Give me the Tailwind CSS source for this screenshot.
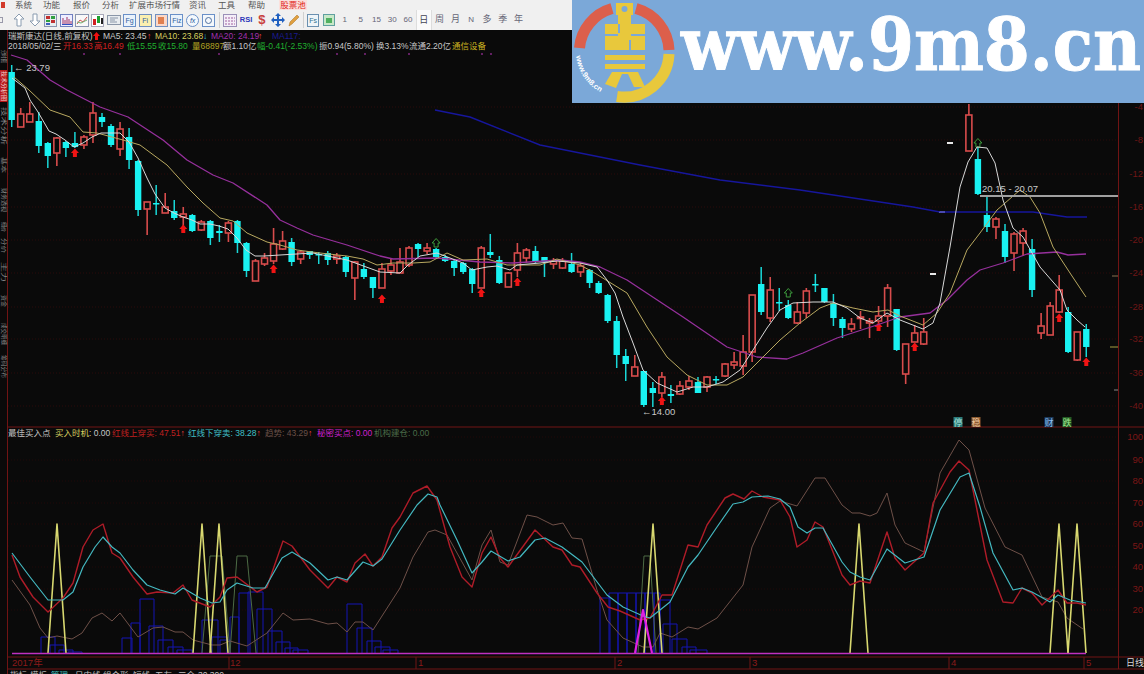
<!DOCTYPE html>
<html lang="zh-CN">
<head>
  <meta charset="UTF-8">
  <title>瑞斯康达 - 最佳买入点</title>
  <script src="https://cdn.jsdelivr.net/npm/@tailwindcss/browser@4"></script>
</head>
<body class="bg-[#0a0a0a]">
<div class="w-[1144px] h-[674px] flex flex-col overflow-hidden relative font-['Liberation_Sans','Noto_Sans_CJK_SC',sans-serif]">

  <!-- menu -->
  <div class="h-[10px] bg-[#f0f0f0] flex items-center text-[8.5px] leading-[10px] text-[#555] pl-[1px] shrink-0">
    <span class="w-[4px] h-[6px] bg-[#d23a2a] mr-[10px]"></span>
    <span class="w-[28px]">系统</span>
    <span class="w-[30px]">功能</span>
    <span class="w-[29px]">报价</span>
    <span class="w-[27px]">分析</span>
    <span class="w-[60px]">扩展市场行情</span>
    <span class="w-[29px]">资讯</span>
    <span class="w-[30px]">工具</span>
    <span class="w-[31px]">帮助</span>
    <span class="w-[28px] bg-[#fbe0dc] text-[#e02020] text-center">股票池</span>
  </div>

  <!-- toolbar -->
  <div class="h-[20px] w-[572px] bg-[#f0f0f0] flex items-center pl-[11px] text-[8px] text-[#667] shrink-0 relative">
    <span class="absolute left-0 top-[7px] w-[3px] h-[6px] border border-l-0 border-[#99a]"></span>
    <span class="w-[15.8px] flex justify-center"><svg width="12" height="14" viewBox="0 0 12 14"><path d="M6 1 11 6H8V13H4V6H1Z" fill="#fff" stroke="#8a9cb0"/></svg></span>
    <span class="w-[15.8px] flex justify-center"><svg width="12" height="14" viewBox="0 0 12 14"><path d="M6 13 11 8H8V1H4V8H1Z" fill="#fff" stroke="#8a9cb0"/></svg></span>
    <span class="w-[15.8px] flex justify-center"><svg width="13" height="13" viewBox="0 0 13 13"><rect x=".5" y=".5" width="12" height="12" fill="#e8eef0" stroke="#8a96b0"/><rect x="2" y="2" width="4" height="3" fill="#c03030"/><rect x="7" y="2" width="4" height="3" fill="#30a040"/><rect x="2" y="6" width="4" height="2" fill="#30a040"/><rect x="7" y="6" width="4" height="3" fill="#c03030"/><rect x="2" y="9" width="4" height="2" fill="#4060c0"/></svg></span>
    <span class="w-[15.8px] flex justify-center"><svg width="13" height="13" viewBox="0 0 13 13"><rect x=".5" y=".5" width="12" height="12" fill="#eef" stroke="#7080c0"/><path d="M3 10V4M5 10V6M7 10V3M9 10V5M11 10V7" stroke="#a03060"/><path d="M2 10.500H12" stroke="#3050c0"/></svg></span>
    <span class="w-[15.8px] flex justify-center"><svg width="14" height="13" viewBox="0 0 14 13"><rect x=".5" y=".5" width="13" height="12" fill="#f8f8f8" stroke="#8a96b0"/><path d="M2 10 5 6 8 8 12 3" stroke="#d05050" fill="none"/><path d="M2 8 6 9 12 6" stroke="#70b070" fill="none"/></svg></span>
    <span class="w-[15.8px] flex justify-center"><svg width="13" height="13" viewBox="0 0 13 13"><rect x=".5" y=".5" width="12" height="12" fill="#fff" stroke="#aab"/><rect x="2" y="5" width="3" height="6" fill="#d02020"/><rect x="6" y="2" width="3" height="7" fill="#20a030"/><rect x="10" y="4" width="2" height="6" fill="#202020"/></svg></span>
    <span class="w-[15.8px] flex justify-center"><svg width="14" height="12" viewBox="0 0 14 12"><rect x=".5" y="1.500" width="13" height="9" fill="#e8ecf0" stroke="#8a96a8"/><path d="M3 4H11M3 6H8M3 8H10" stroke="#8a96a8"/></svg></span>
    <span class="w-[15.8px] flex justify-center"><span class="w-[13px] h-[13px] border border-[#6a90c8] bg-[#eaf2fb] text-[7px] leading-[11px] text-center text-[#3060a0]">Fg</span></span>
    <span class="w-[15.8px] flex justify-center"><span class="w-[13px] h-[13px] border border-[#7090c0] bg-[#fbf0b0] text-[7px] leading-[11px] text-center text-[#3060a0]">Fi</span></span>
    <span class="w-[15.8px] flex justify-center"><span class="w-[13px] h-[13px] border border-[#7090c0] bg-[#fbd8c8] flex items-center justify-center"><span class="w-[6px] h-[7px] bg-[#e08050]"></span></span></span>
    <span class="w-[15.8px] flex justify-center"><span class="w-[13px] h-[13px] border border-[#6a90c8] bg-[#eaf2fb] text-[7px] leading-[11px] text-center text-[#3060a0]">Fiz</span></span>
    <span class="w-[15.8px] flex justify-center"><span class="w-[13px] h-[13px] border border-[#6a90c8] rounded-full bg-[#f4f8fc] text-[7px] leading-[11px] text-center italic text-[#3060a0]">fx</span></span>
    <span class="w-[15.8px] flex justify-center"><span class="w-[13px] h-[13px] border border-[#6a90c8] bg-[#f4f8fc] flex items-center justify-center"><span class="w-[7px] h-[7px] rounded-full border border-[#5070a0]"></span></span></span>
    <span class="w-[6px] h-[16px] flex justify-center"><span class="w-px h-full bg-[#d0d0d0]"></span></span>
    <span class="w-[15.8px] flex justify-center"><svg width="14" height="13" viewBox="0 0 14 13"><rect x=".5" y=".5" width="13" height="12" fill="#f4eef8" stroke="#9a90b8"/><path d="M2 4H12M2 7H12M2 10H12" stroke="#a060a0" stroke-dasharray="2 1"/></svg></span>
    <span class="w-[15.8px] text-center text-[7.5px] font-bold text-[#2a34b8]">RSI</span>
    <span class="w-[15.8px] text-center text-[13px] font-bold leading-[14px] text-[#c84040]">$</span>
    <span class="w-[15.8px] flex justify-center"><svg width="14" height="14" viewBox="0 0 14 14"><path d="M7 0 10 3H8V6H11V4L14 7 11 10V8H8V11H10L7 14 4 11H6V8H3V10L0 7 3 4V6H6V3H4Z" fill="#2060c0"/></svg></span>
    <span class="w-[15.8px] flex justify-center"><svg width="13" height="13" viewBox="0 0 13 13"><path d="M2 12 3 8 10 1 12 3 5 10Z" fill="#e0a040" stroke="#a87020" stroke-width=".5"/></svg></span>
    <span class="w-[4px] h-[16px] flex justify-center"><span class="w-px h-full bg-[#d0d0d0]"></span></span>
    <span class="w-[15.800px] flex justify-center"><span class="w-[12px] h-[13px] border border-[#6a90b0] bg-[#eef4f8] text-[7px] leading-[11px] text-center text-[#307090]">Fs</span></span>
    <span class="w-[15.8px] flex justify-center"><span class="w-[12px] h-[12px] border border-[#60a0a0] bg-[#c8e8c8] flex items-center justify-center"><span class="w-[6px] h-[5px] bg-[#50b060]"></span></span></span>
    <span class="w-[15.8px] text-center">1</span>
    <span class="w-[15.8px] text-center">5</span>
    <span class="w-[15.8px] text-center">15</span>
    <span class="w-[15.8px] text-center">30</span>
    <span class="w-[15.8px] text-center">60</span>
    <span class="w-[15.8px] h-[20px] leading-[20px] text-center text-[9px] bg-[#fafafa] border-x border-[#ddd] text-[#445]">日</span>
    <span class="w-[15.8px] text-center text-[9px]">周</span>
    <span class="w-[15.8px] text-center text-[9px]">月</span>
    <span class="w-[15.8px] text-center">N</span>
    <span class="w-[15.8px] text-center text-[9px]">多</span>
    <span class="w-[15.8px] text-center text-[9px]">季</span>
    <span class="w-[15.8px] text-center text-[9px]">年</span>
  </div>

  <!-- chart area: a canvas whose coordinates are the data -->
  <div class="relative flex-1 bg-[#0a0a0a]">
    <svg id="chart" class="absolute inset-0" width="1144" height="644" viewBox="0 30 1144 644" font-family="Liberation Sans, Noto Sans CJK SC, sans-serif"></svg>

    <!-- price legend -->
    <div class="absolute left-[8px] top-0 text-[8.5px] leading-[10px] text-[#c8c8c8] whitespace-nowrap">
      <div class="flex h-[10px] mt-[1px]">
        <span class="w-[85px]">瑞斯康达(日线,前复权)</span>
        <span class="w-[10px] flex items-center"><svg width="7" height="8" viewBox="0 0 7 8"><path d="M3.500 0 7 4H5V8H2V4H0Z" fill="#f01010"/></svg></span>
        <span class="w-[44px]">MA5: 23.45</span>
        <span class="w-[8px] text-[#f04040]">↑</span>
        <span class="w-[48px] text-[#d8d060]">MA10: 23.68</span>
        <span class="w-[8px] text-[#30d0e0]">↓</span>
        <span class="w-[47px] text-[#a030b0]">MA20: 24.19</span>
        <span class="w-[14px] text-[#f04040]">↑</span>
        <span class="text-[#1a1a90]">MA117:</span>
      </div>
      <div class="flex h-[10px]">
        <span class="w-[55px]">2018/05/02/三</span>
        <span class="w-[31px] text-[#d02020]">开16.33</span>
        <span class="w-[33px] text-[#d02020]">高16.49</span>
        <span class="w-[31px] text-[#20b030]">低15.55</span>
        <span class="w-[34px] text-[#20b030]">收15.80</span>
        <span class="w-[31px] text-[#b0a020]">量68897</span>
        <span class="w-[34px]">额1.10亿</span>
        <span class="w-[62px] text-[#20b030]">幅-0.41(-2.53%)</span>
        <span class="w-[57px]">振0.94(5.80%)</span>
        <span class="w-[33px]">换3.13%</span>
        <span class="w-[43px]">流通2.20亿</span>
        <span class="text-[#c8b020]">通信设备</span>
      </div>
    </div>

    <!-- indicator legend -->
    <div class="absolute left-[8px] top-[398px] flex text-[8.500px] leading-[10px] whitespace-nowrap">
      <span class="w-[47px] text-[#c8c8c8]">最佳买入点</span>
      <span class="w-[57px] text-[#d8d060]">买入时机<span class="text-[#c8c8c8]">: 0.00</span></span>
      <span class="w-[76px] text-[#c02020]">红线上穿买: 47.51<span class="text-[#f04040]">↑</span></span>
      <span class="w-[77px] text-[#40c0c8]">红线下穿卖: 38.28<span class="text-[#f04040]">↑</span></span>
      <span class="w-[52px] text-[#6a5048]">趋势: 43.29<span class="text-[#f04040]">↑</span></span>
      <span class="w-[57px] text-[#d020d0]">秘密买点: 0.00</span>
      <span class="text-[#4a6a48]">机构建仓: 0.00</span>
    </div>

    <!-- bottom tabs, cut by the window edge -->
    <div class="absolute left-[10px] top-[640px] flex text-[8.5px] leading-[10px] text-[#c0c0c0] whitespace-nowrap">
      <span class="w-[20px]">指标</span>
      <span class="w-[21px]">模板</span>
      <span class="w-[24px] text-[#40c0c0]">管理</span>
      <span class="w-[28px]">日内线</span>
      <span class="w-[30px]">组合形</span>
      <span class="w-[22px]">短线</span>
      <span class="w-[23px]">五友</span>
      <span class="w-[20px]">三仓</span>
      <span>30 300</span>
    </div>
    <span class="absolute left-[1126px] top-[628px] text-[9px] leading-[10px] text-[#d8d8d8] whitespace-nowrap">日线</span>
  </div>

  <!-- site banner over the top right of the window -->
  <div class="absolute left-[572px] top-0 w-[572px] h-[103px] bg-[#7ba8d8]">
    <svg width="572" height="103" viewBox="0 0 572 103" font-family="DejaVu Serif, serif">
      <path d="M7.500 48A45 45 0 0 1 40 8.500" fill="none" stroke="#dc5f4b" stroke-width="11"/>
      <path d="M64 8.500A45 45 0 0 1 97 50" fill="none" stroke="#dc5f4b" stroke-width="11"/>
      <path d="M97 54A45 45 0 0 1 45 96.500" fill="none" stroke="#e8c83c" stroke-width="11"/>
      <path d="M44 3H61V15H59V24H73V50H33V24H46V15H44Z" fill="#e8c83c"/>
      <circle cx="52.500" cy="9" r="3" fill="#7ba8d8"/>
      <path d="M33 35H46M59 35H73M47 24V33M58 40V50" stroke="#7ba8d8" stroke-width="2"/>
      <path d="M33 55H73V60H33ZM33 64H73V69H33ZM40 72H66L73 87H62L56 74H50L44 88 33 84Z" fill="#e8c83c"/>
      <path id="ring" d="M4 56A47 47 0 0 0 38 96" fill="none"/>
      <text font-family="Liberation Sans, sans-serif" font-size="7.500" font-weight="bold" fill="#fff"><textPath href="#ring">www.9m8.cn</textPath></text>
      <text x="109" y="70" font-size="73" font-weight="bold" fill="#fff" stroke="#fff" stroke-width="1" textLength="460" lengthAdjust="spacingAndGlyphs">www.9m8.cn</text>
    </svg>
  </div>
</div>

<script>
  // [index, body top, body bottom, wick top, wick bottom, 'r' red hollow / 'c' cyan solid]
  const candles = [
    [0,72,120,65,127,'c'],[1,114,127,108,127,'r'],[2,114,122,102,122,'r'],[3,121,146,112,153,'c'],
    [4,143,156,142,168,'c'],[5,138,153,137,166,'r'],[6,142,148,141,157,'c'],[7,143,147,132,148,'c'],
    [8,137,145,135,149,'r'],[9,113,135,102,143,'r'],[10,117,122,113,127,'c'],[11,126,145,124,147,'c'],
    [12,129,149,122,156,'r'],[13,137,160,128,169,'c'],[14,161,210,160,216,'c'],[15,202,209,202,235,'r'],
    [16,203,204,185,215,'c'],[17,207,213,193,213,'r'],[18,211,218,200,220,'c'],[19,214,217,207,227,'r'],
    [20,215,231,214,232,'c'],[21,222,230,220,231,'r'],[22,221,238,220,245,'c'],[23,231,233,225,242,'c'],
    [24,223,233,221,242,'r'],[25,221,243,220,253,'c'],[26,243,271,242,277,'c'],[27,261,281,259,281,'r'],
    [28,258,264,253,266,'r'],[29,244,261,228,264,'r'],[30,241,249,231,250,'r'],[31,242,262,238,266,'c'],
    [32,252,259,250,264,'r'],[33,251,255,251,259,'c'],[34,254,255,252,264,'c'],[35,253,260,251,265,'c'],
    [36,256,259,253,264,'r'],[37,257,272,256,277,'c'],[38,262,278,261,300,'r'],[39,269,277,263,279,'c'],
    [40,277,288,277,298,'c'],[41,269,288,263,288,'r'],[42,265,271,259,275,'r'],[43,262,273,248,273,'r'],
    [44,248,265,246,267,'r'],[45,244,249,243,257,'c'],[46,248,251,243,254,'r'],[47,249,257,248,259,'c'],
    [48,257,261,255,262,'c'],[49,261,268,260,276,'c'],[50,263,272,262,274,'c'],[51,269,284,268,293,'c'],
    [52,248,288,246,288,'r'],[53,252,255,234,258,'c'],[54,260,283,256,284,'c'],[55,273,287,272,287,'r'],
    [56,253,270,243,277,'r'],[57,250,258,248,263,'r'],[58,251,261,246,263,'c'],[59,257,262,257,277,'c'],
    [60,261,264,258,269,'r'],[61,261,268,258,269,'r'],[62,264,272,253,273,'c'],[63,266,272,263,277,'r'],
    [64,270,283,269,288,'c'],[65,283,293,281,294,'c'],[66,295,321,294,323,'c'],[67,321,355,316,368,'c'],
    [68,356,364,349,381,'c'],[69,367,376,355,376,'r'],[70,371,405,371,407,'c'],[71,388,393,382,407,'c'],
    [72,377,393,372,397,'r'],[73,394,396,385,403,'c'],[74,386,394,381,395,'r'],[75,381,387,376,390,'r'],
    [76,382,393,377,393,'c'],[77,377,387,376,392,'r'],[78,379,380,376,384,'c'],[79,364,376,363,377,'r'],
    [80,362,365,352,369,'r'],[81,352,366,335,375,'r'],[82,295,352,295,362,'r'],[83,284,312,267,315,'c'],
    [84,290,318,277,322,'r'],[85,302,303,288,311,'c'],[86,305,318,300,319,'c'],[87,312,323,302,324,'r'],
    [88,291,313,288,318,'r'],[89,284,285,274,292,'c'],[90,288,302,288,303,'c'],[91,303,318,294,326,'c'],
    [92,319,328,317,338,'c'],[93,324,329,318,332,'r'],[94,317,318,311,329,'r'],[95,321,323,318,338,'r'],
    [96,316,321,306,330,'r'],[97,288,316,284,327,'r'],[98,309,350,309,351,'c'],[99,344,374,344,384,'r'],
    [100,333,342,325,342,'r'],[101,332,344,318,345,'r'],[106,115,151,104,151,'r'],[107,159,194,147,195,'c'],
    [108,215,227,197,232,'c'],[109,219,227,217,239,'r'],[110,231,257,224,263,'c'],[111,234,253,232,271,'r'],
    [112,231,243,228,256,'r'],[113,249,290,239,297,'c'],[114,326,333,313,339,'r'],[115,306,335,302,335,'r'],
    [116,290,312,275,313,'r'],[117,312,352,307,353,'c'],[118,332,360,332,361,'r'],[119,329,347,324,357,'c']
  ];
  const upArrows = [[7,153],[19,229],[29,269],[41,299],[52,293],[56,282],[72,401],[96,327],[100,347],[116,318],[119,362]];
  const greenArrows = [[47,243],[86,293],[107,143]];

  const ma5 = '12,78 25,88 30,100 38,112 49,131 56,134 65,140 74,147 83,143 92,137 101,133 120,133 129,142 138,158 147,178 155,194 165,208 174,213 183,217 192,220 200,224 210,224 219,226 228,229 237,238 246,250 255,256 264,256 280,255 313,253 347,260 380,272 400,273 408,265 420,256 437,253 450,258 463,263 472,270 487,267 497,266 510,270 517,265 540,263 557,261 580,263 597,267 607,280 615,293 623,317 633,343 643,370 657,383 677,392 693,387 707,387 723,382 740,370 753,350 767,328 780,310 793,303 813,302 833,302 847,308 860,318 873,323 887,313 900,320 923,329 933,323 940,303 950,247 960,187 968,162 977,147 987,148 995,163 1003,200 1013,228 1023,237 1040,267 1060,290 1067,310 1077,320 1085,327';
  const ma10 = '14,77 29,90 50,110 70,117 83,132 97,133 123,140 140,145 167,165 187,187 203,203 220,218 233,221 247,233 267,242 280,245 297,250 320,253 347,256 363,259 377,265 393,263 413,263 430,262 447,253 463,260 487,259 507,265 540,265 557,259 580,265 593,272 627,293 647,327 667,357 687,375 707,385 727,385 743,377 760,360 780,340 800,323 820,308 833,303 853,308 873,312 888,310 900,316 923,325 937,313 950,293 967,250 980,233 997,210 1020,190 1030,197 1040,213 1053,247 1070,273 1086,297';
  const ma20 = '11,55 27,60 50,80 67,90 100,107 128,117 163,140 187,160 213,175 233,183 267,205 280,220 297,228 313,235 347,245 380,256 393,259 437,258 480,262 513,263 560,260 580,262 600,267 627,280 683,317 727,347 757,357 787,359 803,353 837,338 877,325 900,317 930,313 947,300 967,280 980,270 1003,263 1027,254 1057,252 1068,255 1086,254';
  const maBlue = '435,110 470,117 540,145 640,165 720,180 800,190 880,202 913,207 940,212 1033,212 1067,217 1087,217';

  const red = '12,555 20,577 33,597 48,612 63,598 73,583 83,547 93,530 103,524 112,553 120,558 133,577 147,594 157,592 173,593 183,585 192,600 210,607 220,597 227,578 237,577 257,592 267,587 283,541 292,546 310,570 328,588 337,577 347,582 355,563 365,554 373,566 382,557 392,528 400,517 413,493 427,486 437,500 450,547 462,577 472,587 482,553 491,537 500,558 508,567 535,530 553,547 562,550 572,565 580,567 597,593 608,607 620,611 640,620 650,618 662,595 672,595 688,545 698,547 707,525 725,498 733,494 744,499 752,491 763,497 780,500 790,517 797,547 807,540 815,522 823,527 833,552 842,575 850,585 860,581 870,583 887,532 895,558 905,570 924,553 933,503 950,472 959,461 969,470 977,510 987,560 1003,602 1013,603 1022,588 1032,593 1042,605 1058,590 1067,603 1077,603 1086,605';
  const cyan = '12,553 30,577 48,600 63,600 73,592 83,567 95,547 103,537 112,547 120,553 133,570 147,585 160,590 175,594 183,588 200,598 212,603 220,602 227,590 237,583 253,588 265,588 282,558 292,552 310,563 328,580 337,577 347,580 363,562 373,566 382,559 400,530 417,505 428,494 437,497 440,505 457,540 472,573 482,562 491,551 508,561 520,557 535,540 545,538 562,547 582,562 607,595 623,607 643,616 650,618 670,602 688,567 698,555 717,527 733,504 743,502 752,497 768,496 780,499 790,507 798,527 807,533 815,528 823,528 842,562 850,572 860,577 870,580 887,549 905,563 924,557 940,510 960,477 969,473 980,507 993,553 1013,590 1022,588 1032,592 1050,602 1058,595 1070,600 1086,603';
  const trend = '12,580 30,605 40,628 48,638 57,636 72,639 82,633 92,618 102,613 112,621 120,613 138,637 153,628 163,627 175,632 183,632 193,640 212,645 220,645 230,641 247,646 267,633 283,613 293,620 310,619 328,624 337,623 347,632 355,622 363,622 373,630 400,588 413,557 428,532 435,530 447,535 472,580 482,545 491,530 500,562 508,565 527,515 537,517 553,525 563,523 572,538 582,539 597,590 607,620 623,638 643,647 653,647 660,633 672,637 688,627 698,629 717,618 743,585 752,547 770,508 780,501 797,506 815,478 825,478 842,505 852,513 860,513 870,516 877,513 887,493 895,525 905,543 924,552 940,473 959,440 969,450 985,508 1005,547 1022,555 1042,597 1058,602 1067,618 1083,629';

  // [left, right, top] of the blue volume steps, all standing on y=653
  const steps = [
    [41,55,637],[50,64,645],[59,73,650],[68,82,652],
    [122,132,638],[131,140,623],[140,154,599],[149,163,626],[158,173,640],[168,183,647],[177,192,650],
    [202,218,620],[212,227,637],[220,230,640],[230,239,617],[239,250,593],[248,263,592],[257,272,609],[268,282,631],[276,290,642],[285,298,648],[293,308,650],
    [347,362,604],[357,372,628],[367,381,641],[375,390,647],[383,398,650],
    [600,610,598],[609,618,593],[618,627,593],[627,636,593],[636,645,593],[645,654,593],[654,660,593],[660,670,600],[663,677,624],[672,687,639],[682,696,647],[690,707,650]
  ];
  const peaks = [57,202,219,653,859,1059,1077];
  const pulses = ['202,653 210,556 222,556 230,653 237,556 247,556 256,653', '638,653 644,556 650,556 656,653'];

  const cx = i => 11.7 + 9.03 * i;
  const line = (pts, color, w) => `<polyline points="${pts}" fill="none" stroke="${color}" stroke-width="${w}" stroke-linejoin="round"/>`;
  let s = '';

  // dotted grid
  [107,140,174,207,240,273,307,339,373,406].forEach(y => s += `<path d="M8 ${y}H1118" stroke="#3a0c0c" stroke-width=".7" stroke-dasharray="1 2"/>`);
  [437,460,481,503,524,546,567,589,610].forEach(y => s += `<path d="M8 ${y}H1118" stroke="#2c0a0a" stroke-width=".7" stroke-dasharray="1 2"/>`);

  // frame
  s += `<path d="M7.5 30V674M1118.500 100V669M8 427H1144M8 657H1144M8 669H1144" stroke="#701414" fill="none"/>`;
  [232,419,618,753,952,1087].forEach(x => s += `<path d="M${x - 3} 657V669" stroke="#701414"/>`);

  // left strip
  [[50,63],[107,145],[157,173],[188,212],[222,232],[238,253],[262,282],[295,307],[323,345],[355,378]].forEach(([a, b], k) => {
    s += `<text transform="translate(1.500 ${a}) rotate(90)" font-size="5.500" fill="#888" textLength="${b - a}" lengthAdjust="spacingAndGlyphs">${['分时图','技术分析','基本','财务透视','细价','分价','主力','资金','成交明细','筹码分布'][k]}</text>`;
  });
  s += `<rect x="0" y="70" width="7" height="32" fill="#b81818"/><text transform="translate(1.500 71) rotate(90)" font-size="5.500" fill="#f0d0d0" textLength="30" lengthAdjust="spacingAndGlyphs">技术分析图</text>`;

  // axes labels
  [['-4',107],['-8',140],['-12',174],['-16',207],['-20',240],['-24',273],['-28',307],['-32',339],['-36',373],['-40',406]].forEach(([t, y]) => {
    s += `<text x="1143" y="${y + 3}" text-anchor="end" font-size="9.500" fill="#6e1616">${t}</text>`;
  });
  [[100,437],[90,460],[80,481],[70,503],[60,524],[50,546],[40,567],[30,589],[20,610]].forEach(([t, y]) => {
    s += `<text x="1143" y="${y + 3}" text-anchor="end" font-size="9.500" fill="#7a1616">${t}</text>`;
  });
  [['2017年',12],['12',230],['1',418],['2',617],['3',752],['4',951],['5',1086]].forEach(([t, x]) => {
    s += `<text x="${x}" y="666" font-size="9.500" fill="#8a1a1a">${t}</text>`;
  });

  // right ticks and stray dashes
  s += `<path d="M1112 276H1118" stroke="#8a7050"/><path d="M1110 347H1118" stroke="#a8a040"/><path d="M1114 390H1118" stroke="#888"/>`;
  s += `<path d="M947 143H953M939 212H945M930 274H936" stroke="#e8e8e8" stroke-width="2"/>`;

  // purple marks under the legend
  [84,120,219,337,365,409,482,491].forEach(x => s += `<path d="M${x - 1} 53l2 2M${x + 1} 53l-2 2" stroke="#8a2a8a" stroke-width=".7"/>`);

  // candles
  candles.forEach(([i, top, bot, wt, wb, kind]) => {
    const x = cx(i);
    if (kind === 'c') {
      s += `<path d="M${x} ${wt}V${wb}" stroke="#19d8d8" stroke-width="1.500"/>`;
      s += `<rect x="${x - 3.2}" y="${top}" width="6.400" height="${Math.max(bot - top, 1.5)}" fill="#19f2f2"/>`;
    } else {
      s += `<path d="M${x} ${wt}V${top}M${x} ${bot}V${wb}" stroke="#d84c4c" stroke-width="1.600"/>`;
      s += `<rect x="${x - 3}" y="${top}" width="6" height="${Math.max(bot - top, 1.5)}" fill="#0a0a0a" stroke="#d84c4c" stroke-width="1.600"/>`;
    }
  });
  upArrows.forEach(([i, y]) => {
    const x = cx(i);
    s += `<path d="M${x} ${y - 4.5}l4 4.500h-2v4h-4v-4h-2z" fill="#f01414"/>`;
  });
  greenArrows.forEach(([i, y]) => {
    const x = cx(i);
    s += `<path d="M${x} ${y - 4.5}l4 4.500h-2v4h-4v-4h-2z" fill="none" stroke="#3c9a3c"/>`;
  });

  // moving averages
  s += line(maBlue, '#16169c', 1.4) + line(ma20, '#96309c', 1.3) + line(ma10, '#b8a860', 1) + line(ma5, '#d8d8d8', 1);

  // price notes
  s += `<path d="M980 196H1118" stroke="#a0a0a0" stroke-width="2"/>`;
  s += `<text x="982" y="192" font-size="9.500" fill="#c8c8c8">20.15 - 20.07</text>`;
  s += `<text x="14" y="71" font-size="9.500" fill="#c8c8c8">← 23.79</text>`;
  s += `<text x="642" y="415" font-size="9.500" fill="#c8c8c8">←14.00</text>`;

  // event flags at the foot of the price panel
  [[958,'停','#2c7a78','#a8e0d8'],[976,'稳','#8a5a30','#f0c8a0'],[1049,'财','#1c3a5c','#90c0f0'],[1067,'跌','#245a24','#a0e890']].forEach(([x, t, bg, fg]) => {
    s += `<rect x="${x - 4.5}" y="417" width="9" height="10" fill="${bg}"/><text x="${x}" y="425.500" text-anchor="middle" font-size="9" fill="${fg}">${t}</text>`;
  });

  // indicator panel
  steps.forEach(([a, b, top]) => s += `<path d="M${a} 653V${top}H${b}V653" fill="none" stroke="#1414b4"/>`);
  pulses.forEach(p => s += line(p, '#4d6b45', 1));
  s += line(trend, '#6e5048', 1);
  peaks.forEach(x => s += line(`${x - 9},653 ${x},524 ${x + 9},653`, '#d8d870', 1.600));
  s += line(red, '#ae1c28', 1.400) + line(cyan, '#44b8c0', 1.200);
  s += `<path d="M12 653.500H1086" stroke="#c030c0" stroke-width="1.600"/>`;
  s += line('635,653 643,610 652,653', '#e020e0', 2.2);

  document.getElementById('chart').innerHTML = s;
</script>
</body>
</html>
